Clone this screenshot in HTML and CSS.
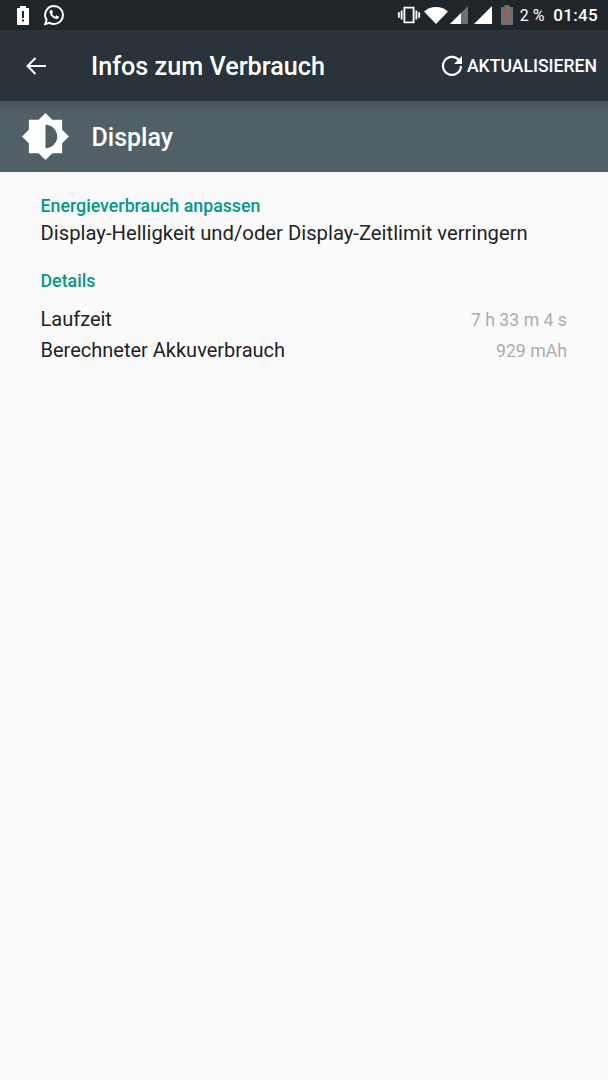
FILE: index.html
```html
<!DOCTYPE html>
<html lang="de">
  <head>
    <meta charset="UTF-8" />
    <meta name="viewport" content="width=device-width, initial-scale=1.0" />
    <title>Infos zum Verbrauch</title>
    <link rel="stylesheet" href="styles.css">
  </head>
  <body>
    <div class="status-bar">
      <div class="status-left">
        <svg class="icon-alert" width="14" height="20" viewBox="0 0 14 20">
          <path fill="#fff" fill-rule="evenodd" d="M4 1h6v2h3v17H1V3h3zM6 6v7h2V6zM6 14.500v2h2v-2z"/>
        </svg>
        <svg class="icon-whatsapp" width="22" height="22" viewBox="0 0 22 22">
          <path fill="none" stroke="#fff" stroke-width="2" d="M11 2a9 9 0 0 1 0 18c-1.700 0-3.100-.4-4.400-1.200l-4.300 1.300 1.300-4.200A9 9 0 0 1 11 2z"/>
          <path fill="#fff" d="M8 6.300c.5-.3 1-.3 1.200.2l.7 1.700c.1.300 0 .6-.2.800l-.6.700c.7 1.300 1.700 2.300 3.200 3l.8-.9c.2-.2.500-.3.800-.2l1.700.8c.4.200.5.500.4.900-.3 1.200-1.500 1.900-2.700 1.700-3.300-.6-6-3.200-6.700-6.300-.2-1.200.3-2.200 1.400-2.900z"/>
        </svg>
      </div>
      <div class="status-right">
        <svg width="24" height="20" viewBox="0 0 26 20">
          <path fill="#fff" fill-rule="evenodd" d="M7 1h12v18H7zM9 3v14h8V3z"/>
          <path fill="#fff" d="M4 5h2v10H4zM1 7h2v6H1zM20 5h2v10h-2zM23 7h2v6h-2z"/>
        </svg>
        <svg class="icon-wifi" width="24" height="17" viewBox="0 0 24 17">
          <path fill="#fff" d="M0 4.500C3 2 7 0 12 0s9 2 12 4.500L12 17z"/>
        </svg>
        <svg class="icon-signal" width="18" height="18" viewBox="0 0 18 18">
          <path fill="#6b7073" d="M18 0v18H0z"/>
          <path fill="#fff" d="M11 7v11H0z"/>
        </svg>
        <svg class="icon-signal-full" width="18" height="18" viewBox="0 0 18 18">
          <path fill="#fff" d="M18 0v18H0z"/>
        </svg>
        <svg class="icon-battery" width="12" height="20" viewBox="0 0 12 20">
          <path fill="#6b7073" d="M3.500 0h5v2H12v18H0V2h3.500z"/>
          <path fill="#e8491d" d="M5 5h2v8H5zM5 14.500h2v2H5z"/>
        </svg>
        <span class="battery-text">2 %</span>
        <span class="clock">01:45</span>
      </div>
    </div>

    <header class="toolbar">
      <svg class="icon-back" width="22" height="20" viewBox="0 0 22 20">
        <path fill="none" stroke="#fff" stroke-width="2" d="M21 10H3M10.500 2L2.500 10l8 8"/>
      </svg>
      <h1 class="toolbar-title">Infos zum Verbrauch</h1>
      <div class="refresh">
        <svg width="22" height="22" viewBox="0 0 22 22">
          <path fill="none" stroke="#fff" stroke-width="2.200" d="M18 5.200A9 9 0 1 0 20 11"/>
          <path fill="#fff" d="M21 1v8h-8z"/>
        </svg>
        <span>AKTUALISIEREN</span>
      </div>
    </header>

    <section class="app-header">
      <svg class="icon-brightness" width="48" height="48" viewBox="0 0 48 48">
        <path fill="#fff" fill-rule="evenodd" d="M24 0l7 7h10v10l7 7-7 7v10H31l-7 7-7-7H7V31l-7-7 7-7V7h10zM24 12v24c6.600 0 12-5.400 12-12s-5.400-12-12-12z"/>
      </svg>
      <h2 class="app-name">Display</h2>
    </section>

    <main class="content">
      <h3 class="section-title">Energieverbrauch anpassen</h3>
      <p class="tip">Display-Helligkeit und/oder Display-Zeitlimit verringern</p>

      <h3 class="section-title details-title">Details</h3>
      <div class="detail-row">
        <span>Laufzeit</span>
        <span class="detail-value">7 h 33 m 4 s</span>
      </div>
      <div class="detail-row">
        <span>Berechneter Akkuverbrauch</span>
        <span class="detail-value">929 mAh</span>
      </div>
    </main>
  </body>
</html>
```

FILE: styles.css
```css
html,
body {
  height: 100%;
}
body {
  margin: 0;
  font-family: Roboto, sans-serif;
  background-color: #fafafa;
  color: #1f2326;
  display: flex;
  flex-direction: column;
}
h1,
h2,
h3,
p {
  margin: 0;
  font-weight: 400;
}
svg {
  display: block;
  flex-shrink: 0;
}
.status-bar {
  height: 30px;
  background-color: #1f2529;
  display: flex;
  justify-content: space-between;
  align-items: center;
  padding: 0 10px 0 16px;
}
.status-left,
.status-right {
  display: flex;
  align-items: center;
}
.status-left {
  gap: 13px;
}
.status-right {
  color: #fff;
}
.icon-wifi {
  margin-left: 3px;
}
.icon-signal {
  margin-left: 2px;
}
.icon-signal-full {
  margin-left: 6px;
}
.icon-battery {
  margin-left: 9px;
}
.battery-text {
  font-size: 16px;
  margin-left: 7px;
}
.clock {
  font-size: 17px;
  font-weight: 500;
  margin-left: 9px;
  letter-spacing: 0.3px;
}
.toolbar {
  height: 71px;
  background-color: #293339;
  display: flex;
  align-items: center;
  padding: 0 11px 0 25px;
  color: #fff;
}
.toolbar-title {
  font-size: 25.200px;
  font-weight: 500;
  line-height: 30px;
  padding-top: 2px;
  margin-left: 44px;
  flex: 1;
}
.refresh {
  display: flex;
  align-items: center;
  gap: 4px;
  font-size: 17.600px;
  font-weight: 500;
}
.app-header {
  height: 71px;
  background: linear-gradient(#4a575e, #515f66 12px);
  display: flex;
  align-items: center;
  padding-left: 22px;
  color: #fff;
}
.icon-brightness {
  width: 47px;
  height: 47px;
}
.app-name {
  font-size: 25px;
  font-weight: 500;
  line-height: 30px;
  padding-top: 2px;
  margin-left: 22.500px;
}
.content {
  flex: 1;
  padding: 24px 41px 0 40.500px;
}
.section-title {
  font-size: 17.800px;
  font-weight: 500;
  line-height: 20px;
  color: #009b87;
}
.tip {
  font-size: 20.250px;
  line-height: 30px;
  margin-top: 2px;
}
.details-title {
  margin-top: 23px;
  margin-bottom: 13px;
}
.detail-row {
  display: flex;
  justify-content: space-between;
  align-items: baseline;
  font-size: 20px;
  line-height: 30px;
}
.detail-value {
  font-size: 17.700px;
  color: #a6aeb3;
}
```
